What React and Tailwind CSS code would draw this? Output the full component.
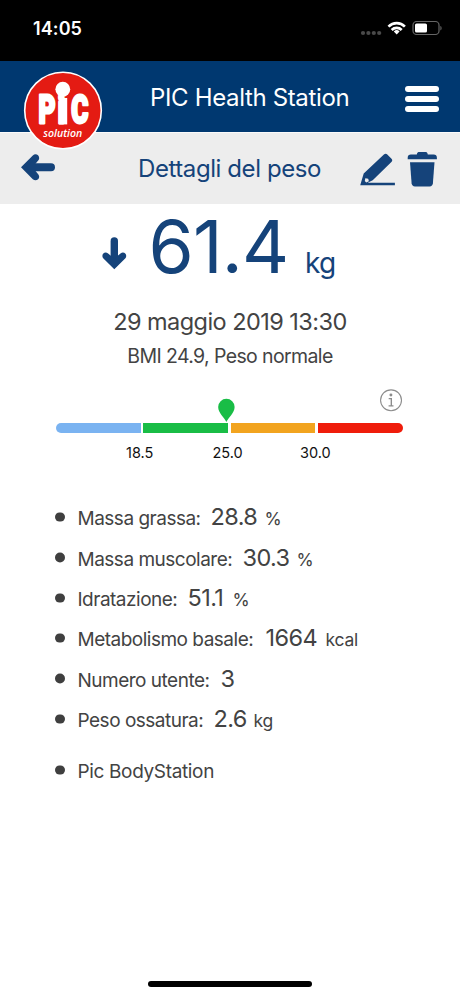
/**
 * Weight Detail Page
 */

import React from 'react';

const measurements = [
  { label: 'Massa grassa:', value: '28.8', unit: '%', labelWidth: 'w-[123px]', valueWidth: 'w-[47px]' },
  { label: 'Massa muscolare:', value: '30.3', unit: '%', labelWidth: 'w-[155px]', valueWidth: 'w-[47px]' },
  { label: 'Idratazione:', value: '51.1', unit: '%', labelWidth: 'w-[100px]', valueWidth: 'w-[38px]' },
  { label: 'Metabolismo basale:', value: '1664', unit: 'kcal', labelWidth: 'w-[178px]', valueWidth: 'w-[53px]' },
  { label: 'Numero utente:', value: '3', unit: '', labelWidth: 'w-[133px]', valueWidth: 'w-[13px]' },
  { label: 'Peso ossatura:', value: '2.6', unit: 'kg', labelWidth: 'w-[126px]', valueWidth: 'w-[33px]' },
];

function StatusBar() {
  return (
    <div className="flex h-[61px] items-start justify-between bg-black pl-[33px] pr-[18px] text-white">
      <span className="mt-[17px] text-[18px] font-semibold leading-[24px] tracking-[0.1px]">14:05</span>
      <svg className="mt-[18px]" width="82" height="20" viewBox="360 18 82 20" fill="none">
        <g fill="#4a4a4a">
          <circle cx="363" cy="33" r="2.1" />
          <circle cx="368.4" cy="33" r="2.1" />
          <circle cx="373.8" cy="33" r="2.1" />
          <circle cx="379.2" cy="33" r="2.1" />
        </g>
        <g stroke="#fff" strokeWidth="2.7">
          <path d="M388.5 26.6a11.6 11.6 0 0 1 16.4 0" />
          <path d="M391.7 30a7.1 7.1 0 0 1 10 0" />
        </g>
        <path d="M396.7 34.4l-2.9-2.9a4.1 4.1 0 0 1 5.8 0z" fill="#fff" />
        <rect x="413" y="21.5" width="26" height="13" rx="3.6" stroke="#666" strokeWidth="1.2" />
        <rect x="415" y="23.5" width="12" height="9" rx="1.6" fill="#fff" />
        <path d="M440.4 26v4.4c1.6-.6 1.6-3.8 0-4.4z" fill="#666" />
      </svg>
    </div>
  );
}

function Logo() {
  return (
    <svg width="80" height="80" viewBox="23 71 80 80">
      <circle cx="63" cy="110.5" r="38.3" fill="#e41b13" stroke="#fff" strokeWidth="1.6" />
      <text
        x="58.2 87.6 107.8"
        y="123.1"
        transform="scale(0.66 1)"
        fill="#fff"
        stroke="#fff"
        strokeWidth="2.9"
        strokeLinejoin="round"
        fontFamily="Roboto, sans-serif"
        fontWeight="900"
        fontSize="39.5"
      >
        PiC
      </text>
      <rect x="58.8" y="98" width="8.4" height="26.4" fill="#fff" />
      <circle cx="62.8" cy="89.2" r="7.4" fill="#fff" />
      <text
        x="43.3"
        y="136.6"
        textLength="39"
        lengthAdjust="spacingAndGlyphs"
        fill="#fff"
        fontFamily="Open Sans, sans-serif"
        fontStyle="italic"
        fontWeight="600"
        fontSize="11.5"
      >
        solution
      </text>
    </svg>
  );
}

function Header() {
  return (
    <header className="relative flex h-[71px] items-center justify-end bg-[#003870] pr-[21px]">
      <div className="absolute left-[23px] top-[10px] z-10">
        <Logo />
      </div>
      <h1 className="mr-[54px] mt-[3px] w-[201px] whitespace-nowrap text-[24px] font-normal leading-[30px] tracking-[-0.35px] text-white">
        PIC Health Station
      </h1>
      <button className="flex flex-col gap-[4.6px] pt-[5px]">
        <span className="h-[5.4px] w-[34px] rounded-full bg-white" />
        <span className="h-[5.4px] w-[34px] rounded-full bg-white" />
        <span className="h-[5.4px] w-[34px] rounded-full bg-white" />
      </button>
    </header>
  );
}

function TitleBar() {
  return (
    <div className="flex h-[72px] items-center border-t border-[#fafafa] bg-[#ededed] pl-[20px] text-[#15437a]">
      <svg className="mt-[-4px]" width="36" height="28" viewBox="20 152 36 28" fill="none">
        <path d="M28 166.3h23" stroke="currentColor" strokeWidth="8" strokeLinecap="round" />
        <path d="M21 166.3L32.8 154.4c3.5-3 8.3 1 5.6 4.8L32.5 166.3l5.9 7.1c2.7 3.8-2.1 7.8-5.6 4.8z" fill="currentColor" />
        <path d="M26 166.3l9-9v18z" fill="currentColor" />
      </svg>
      <h2 className="ml-[82px] w-[184px] whitespace-nowrap text-[24px] font-normal leading-[30px] tracking-[-0.42px]">
        Dettagli del peso
      </h2>
      <svg className="ml-[37px]" width="80" height="38" viewBox="359 149 80 38">
        <path
          d="M360.3 184l3.4-11.6 20.2-18.8c1-1 2.4-1 3.4-.1l4.2 4.2c1 1 1 2.3-.1 3.4l-18.7 18.1-5.1 2.5h27.3v2.6h-34.6z"
          fill="currentColor"
        />
        <path d="M365.3 177.2l2.9.5.7 2.5-2.7 1.3-1.4-1.6z" fill="#ededed" />
        <path
          d="M407.7 158.3v-1.5c0-2 1.2-3.2 3.2-3.2h5.9c.4-1.9 1-2.5 2.8-2.5h5.4c1.8 0 2.4.6 2.8 2.5h5.9c2 0 3.2 1.2 3.2 3.2v1.5z"
          fill="currentColor"
        />
        <path d="M410 161.3h24.5l-1.6 20.9c-.2 2-1.4 3.2-3.2 3.2h-14.8c-1.9 0-3.1-1.2-3.3-3.2z" fill="currentColor" />
      </svg>
    </div>
  );
}

function WeightSummary() {
  return (
    <section className="flex h-[176px] flex-col">
      <div className="flex h-[88px] items-baseline pl-[101px] text-[#15437a]">
        <svg className="mt-[32px] self-start" width="26" height="34" viewBox="101 236 26 34" fill="none">
          <path d="M114.3 241v22" stroke="currentColor" strokeWidth="7.4" strokeLinecap="round" />
          <path d="M114.3 269.3L103.2 258.3c-2.5-3.6 1.2-7.4 4.9-4.9l6.2 5.3 6.2-5.3c3.7-2.5 7.4 1.3 4.9 4.9z" fill="currentColor" />
        </svg>
        <span className="ml-[21.5px] w-[156.5px] text-[73px] font-normal leading-[86px] tracking-[-0.8px]">61.4</span>
        <span className="text-[28px] font-normal leading-[30px] tracking-[-0.8px]">kg</span>
      </div>
      <p className="mt-[15px] text-center text-[23.5px] font-normal leading-[30px] tracking-[-0.55px] text-[#434343]">
        29 maggio 2019 13:30
      </p>
      <p className="mt-[7px] text-center text-[19.5px] font-normal leading-[24px] tracking-[-0.62px] text-[#434343]">
        BMI 24.9, Peso normale
      </p>
    </section>
  );
}

function BmiScale() {
  return (
    <section className="h-[118px] px-[56px] pt-[7px]">
      <div className="flex h-[36px] items-end">
        <svg className="ml-[161px]" width="20" height="26" viewBox="217 397 20 26">
          <path d="M226.6 422.3c-1.8-4.6-8.4-9-8.4-15.4a8.4 8.4 0 0 1 16.8 0c0 6.4-6.6 10.8-8.4 15.4z" fill="#19bd46" />
        </svg>
        <svg className="mb-[9px] ml-[142px]" width="26" height="26" viewBox="379 388 26 26" fill="none">
          <circle cx="391.3" cy="400.3" r="10.7" stroke="#8c8c8c" strokeWidth="1.1" />
          <circle cx="391.2" cy="394.8" r="1.5" fill="#8c8c8c" />
          <path d="M388.9 398.6h2.7v7.2M388.8 406h5" stroke="#8c8c8c" strokeWidth="1.4" />
        </svg>
      </div>
      <div className="flex h-[9.5px] gap-[2.5px]">
        <div className="w-[84.8px] rounded-l-full bg-[#7ab3f1]" />
        <div className="w-[84.8px] bg-[#19bd46]" />
        <div className="w-[84.8px] bg-[#f2a41f]" />
        <div className="w-[84.8px] rounded-r-full bg-[#ef1c0b]" />
      </div>
      <div className="ml-[70px] mt-[10.5px] flex text-[14.5px] leading-[20px] text-[#111]">
        <span className="w-[86.5px]">18.5</span>
        <span className="w-[87.5px]">25.0</span>
        <span>30.0</span>
      </div>
    </section>
  );
}

function Bullet() {
  return <span className="mr-[13px] h-[9.5px] w-[9.5px] shrink-0 -translate-y-[3.5px] rounded-full bg-[#3f3f3f]" />;
}

export default function App() {
  return (
    <div className="flex h-[996px] w-[460px] flex-col overflow-hidden bg-white font-['Inter',sans-serif]">
      <StatusBar />
      <Header />
      <TitleBar />
      <WeightSummary />
      <BmiScale />

      <ul className="-mt-[0.7px] pl-[55px] font-normal text-[#434343]">
        {measurements.map((item) => (
          <li key={item.label} className="flex h-[40.4px] items-baseline whitespace-nowrap">
            <Bullet />
            <span className={`${item.labelWidth} mr-[10px] text-[19px] leading-[40px] tracking-[-0.5px]`}>{item.label}</span>
            <span className={`${item.valueWidth} mr-[7px] text-[23.5px] leading-[40px] tracking-[-0.6px]`}>{item.value}</span>
            <span className="text-[17.5px] leading-[40px] tracking-[-0.2px]">{item.unit}</span>
          </li>
        ))}
        <li className="mt-[12.5px] flex h-[40px] items-baseline">
          <Bullet />
          <span className="text-[19px] leading-[40px] tracking-[-0.35px]">Pic BodyStation</span>
        </li>
      </ul>

      {/* Home indicator */}
      <div className="mx-auto mb-[9px] mt-auto h-[6px] w-[164px] rounded-full bg-black" />
    </div>
  );
}
